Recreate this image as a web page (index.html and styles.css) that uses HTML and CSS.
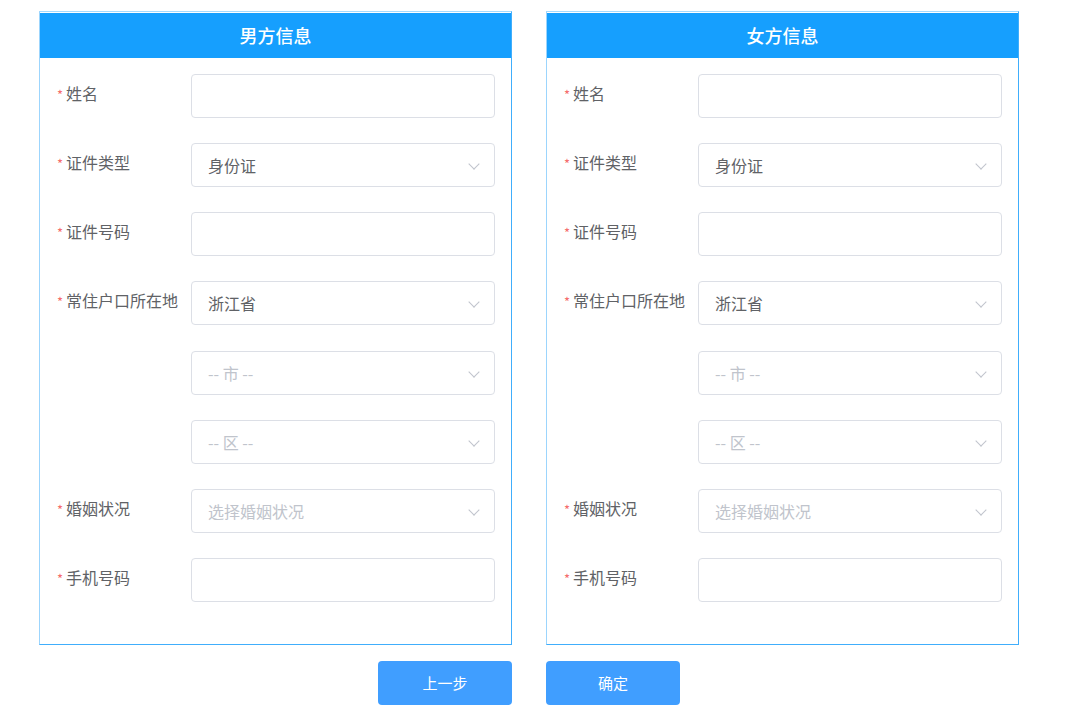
FILE: index.html
```
<!DOCTYPE html>
<html>
<head>
<meta charset="utf-8" />
<title>信息登记</title>
<link rel="stylesheet" href="styles.css">
</head>
<body>
	<div class="wrap">
		<div class="panels">
			<!-- 男方 -->
			<div class="panel">
				<div class="panel_head">男方信息</div>
				<div class="panel_body">
					<div class="row">
						<label class="lbl"><i>*</i>姓名</label>
						<div class="ipt"></div>
					</div>
					<div class="row">
						<label class="lbl"><i>*</i>证件类型</label>
						<div class="ipt sel">身份证<span class="arrow"></span></div>
					</div>
					<div class="row">
						<label class="lbl"><i>*</i>证件号码</label>
						<div class="ipt"></div>
					</div>
					<div class="row">
						<label class="lbl"><i>*</i>常住户口所在地</label>
						<div class="ipt sel">浙江省<span class="arrow"></span></div>
					</div>
					<div class="row">
						<label class="lbl"></label>
						<div class="ipt sel ph">-- 市 --<span class="arrow"></span></div>
					</div>
					<div class="row">
						<label class="lbl"></label>
						<div class="ipt sel ph">-- 区 --<span class="arrow"></span></div>
					</div>
					<div class="row">
						<label class="lbl"><i>*</i>婚姻状况</label>
						<div class="ipt sel ph">选择婚姻状况<span class="arrow"></span></div>
					</div>
					<div class="row">
						<label class="lbl"><i>*</i>手机号码</label>
						<div class="ipt"></div>
					</div>
				</div>
			</div>
			<!-- 女方 -->
			<div class="panel">
				<div class="panel_head">女方信息</div>
				<div class="panel_body">
					<div class="row">
						<label class="lbl"><i>*</i>姓名</label>
						<div class="ipt"></div>
					</div>
					<div class="row">
						<label class="lbl"><i>*</i>证件类型</label>
						<div class="ipt sel">身份证<span class="arrow"></span></div>
					</div>
					<div class="row">
						<label class="lbl"><i>*</i>证件号码</label>
						<div class="ipt"></div>
					</div>
					<div class="row">
						<label class="lbl"><i>*</i>常住户口所在地</label>
						<div class="ipt sel">浙江省<span class="arrow"></span></div>
					</div>
					<div class="row">
						<label class="lbl"></label>
						<div class="ipt sel ph">-- 市 --<span class="arrow"></span></div>
					</div>
					<div class="row">
						<label class="lbl"></label>
						<div class="ipt sel ph">-- 区 --<span class="arrow"></span></div>
					</div>
					<div class="row">
						<label class="lbl"><i>*</i>婚姻状况</label>
						<div class="ipt sel ph">选择婚姻状况<span class="arrow"></span></div>
					</div>
					<div class="row">
						<label class="lbl"><i>*</i>手机号码</label>
						<div class="ipt"></div>
					</div>
				</div>
			</div>
		</div>
		<div class="btns">
			<a class="btn">上一步</a>
			<a class="btn">确定</a>
		</div>
	</div>
</body>
</html>
```
FILE: styles.css
```
html, body, div, label, a {
	padding: 0;
	margin: 0;
}

body {
	background: #fff;
	font-family: "Noto Sans CJK SC", "Liberation Sans", sans-serif;
	font-size: 15px;
	color: #606266;
}

.wrap {
	padding: 11px 0 0 39px;
	width: 980px;
}

.panels {
	display: flex;
	gap: 34px;
}

.panel {
	width: 471px;
	border: 1px solid #40aefc;
	border-top-color: #a6d9fd;
	border-left-color: #9cd5fd;
}

.panel_head {
	height: 45px;
	line-height: 44px;
	margin-top: 1px;
	background: #169ffe;
	color: #fff;
	text-align: center;
	font-size: 18px;
	font-weight: 500;
}

.panel_body {
	padding: 16px 16px 42px 0;
}

.row {
	display: flex;
	margin-bottom: 25.15px;
}

.row:last-child {
	margin-bottom: 0;
}

.lbl {
	width: 134px;
	padding-left: 17px;
	padding-top: 8px;
	line-height: 22px;
	font-size: 16px;
	color: #606266;
	white-space: nowrap;
}

.lbl i {
	font-style: normal;
	color: #f56c6c;
	margin-right: 3px;
	font-size: 13px;
}

.ipt {
	position: relative;
	width: 286px;
	height: 42px;
	line-height: 42px;
	border: 1px solid #dcdfe6;
	border-radius: 4px;
	padding-left: 16px;
	font-size: 16px;
	color: #606266;
}

.ipt.ph {
	color: #c0c4cc;
}

/* 下拉箭头 */
.arrow {
	position: absolute;
	right: 16px;
	top: 16px;
	width: 7px;
	height: 7px;
	border-right: 1px solid #c0c4cc;
	border-bottom: 1px solid #c0c4cc;
	transform: rotate(45deg);
}

.btns {
	display: flex;
	justify-content: center;
	gap: 34px;
	margin-top: 16px;
}

.btn {
	width: 134px;
	height: 44px;
	line-height: 44px;
	background: #409eff;
	border-radius: 4px;
	color: #fff;
	text-align: center;
	font-size: 15px;
	cursor: pointer;
}
```
